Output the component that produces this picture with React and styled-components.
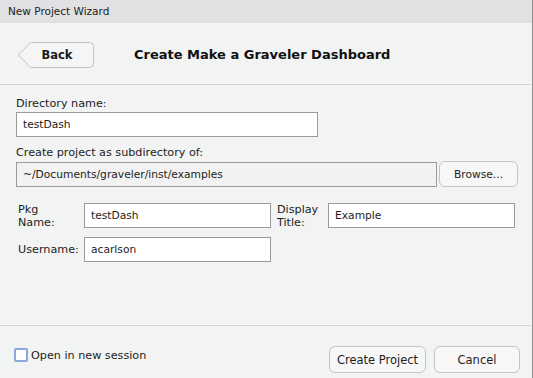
import React from 'react';
import styled, { createGlobalStyle } from 'styled-components';

const Global = createGlobalStyle`
  html, body { margin: 0; padding: 0; background: #f2f3f3; }
  body { font-family: "DejaVu Sans", "Liberation Sans", sans-serif; color: #1d1d1d; }
`;

const App = () => {
  return (
    <>
      <Global />
      <Window>
        <TitleBar>New Project Wizard</TitleBar>
        <Header>
          <BackButton>
            <svg width="76" height="26" viewBox="0 0 76 26">
              <path
                d="M0.5 13 L12.5 0.5 H71.5 Q75.5 0.5 75.5 4.5 V21.5 Q75.5 25.5 71.5 25.5 H12.5 Z"
                fill="#f5f5f6"
                stroke="#c4c4c6"
              />
            </svg>
            <span>Back</span>
          </BackButton>
          <Title>Create Make a Graveler Dashboard</Title>
        </Header>

        <Body>
          <Label>Directory name:</Label>
          <Input $width={302} value="testDash" readOnly />
          <Label $top={9}>Create project as subdirectory of:</Label>
          <Row>
            <Input $width={421} $disabled value="~/Documents/graveler/inst/examples" readOnly />
            <Button $width={79}>Browse...</Button>
          </Row>

          <Grid>
            <FieldLabel>Pkg<br />Name:</FieldLabel>
            <Input $width={187} value="testDash" readOnly />
            <FieldLabel $indent={6}>Display<br />Title:</FieldLabel>
            <Input $width={187} value="Example" readOnly />
            <FieldLabel>Username:</FieldLabel>
            <Input $width={187} value="acarlson" readOnly />
          </Grid>
        </Body>

        <Footer>
          <Check>
            <Box />
            Open in new session
          </Check>
          <Buttons>
            <Button $width={97} $height={27} $big>Create Project</Button>
            <Button $width={86} $height={27} $big>Cancel</Button>
          </Buttons>
        </Footer>
      </Window>
    </>
  );
};

export default App;

const Window = styled.div`
  width: 532px;
  height: 378px;
  border-right: 1px solid #8e8e8e;
  background: #f2f3f3;
  display: flex;
  flex-direction: column;
  overflow: hidden;
`;

const TitleBar = styled.div`
  height: 23px;
  flex-shrink: 0;
  background: #e1e1e4;
  font-size: 10.5px;
  line-height: 23px;
  padding-left: 8px;
  color: #222;
`;

const Header = styled.div`
  height: 62px;
  flex-shrink: 0;
  margin-right: 1px;
  border-bottom: 1px solid #d2d3d3;
  display: flex;
  align-items: center;
  padding-left: 18px;
  padding-top: 2px;
  box-sizing: border-box;
`;

const BackButton = styled.div`
  position: relative;
  width: 76px;
  height: 26px;
  flex-shrink: 0;

  > svg {
    position: absolute;
    left: 0;
    top: 0;
  }

  > span {
    position: absolute;
    left: 0;
    right: 0;
    top: 0;
    line-height: 26px;
    padding-left: 2px;
    text-align: center;
    font-size: 11.5px;
    font-weight: bold;
    color: #1a1a1a;
  }
`;

const Title = styled.div`
  margin-left: 40px;
  font-size: 13px;
  font-weight: bold;
  color: #111;
`;

const Body = styled.div`
  padding: 12px 16px 0 16px;
  flex: 1;
  display: flex;
  flex-direction: column;
  align-items: flex-start;
`;

const Label = styled.div`
  font-size: 11.2px;
  line-height: 14px;
  margin-top: ${(p) => p.$top || 0}px;
  margin-bottom: 1px;
  color: #1d1d1d;
`;

const Input = styled.input`
  width: ${(p) => p.$width}px;
  height: 25px;
  box-sizing: border-box;
  border: 1px solid #9a9a9a;
  background: ${(p) => (p.$disabled ? '#f2f2f2' : '#ffffff')};
  font-family: inherit;
  font-size: 10.7px;
  padding: 0 6px;
  color: #1d1d1d;
  outline: none;
`;

const Row = styled.div`
  display: flex;
  align-items: center;
  gap: 2px;
`;

const Button = styled.div`
  width: ${(p) => p.$width}px;
  height: ${(p) => p.$height || 26}px;
  box-sizing: border-box;
  border: 1px solid #c4c4c6;
  border-radius: 6px;
  background: #f7f7f8;
  display: flex;
  align-items: center;
  justify-content: center;
  white-space: nowrap;
  font-size: ${(p) => (p.$big ? 11.5 : 10.7)}px;
  color: #1d1d1d;
`;

const Grid = styled.div`
  margin-top: 16px;
  margin-left: 2px;
  display: grid;
  grid-template-columns: 66px 187px 57px 187px;
  grid-auto-rows: 25px;
  row-gap: 9px;
  align-items: center;
`;

const FieldLabel = styled.div`
  font-size: 11.2px;
  line-height: 13px;
  color: #1d1d1d;
  padding-left: ${(p) => p.$indent || 0}px;
`;

const Footer = styled.div`
  height: 53px;
  flex-shrink: 0;
  margin-right: 1px;
  border-top: 1px solid #d2d3d3;
  display: flex;
  align-items: flex-end;
  justify-content: space-between;
  padding: 0 11px 5px 14px;
  box-sizing: border-box;
`;

const Check = styled.div`
  display: flex;
  align-items: center;
  font-size: 11.2px;
  margin-bottom: 11px;
  gap: 3px;
`;

const Box = styled.div`
  width: 14px;
  height: 14px;
  box-sizing: border-box;
  border: 2px solid #8aa8dd;
  border-radius: 2px;
  background: #fff;
`;

const Buttons = styled.div`
  display: flex;
  gap: 8px;
`;
